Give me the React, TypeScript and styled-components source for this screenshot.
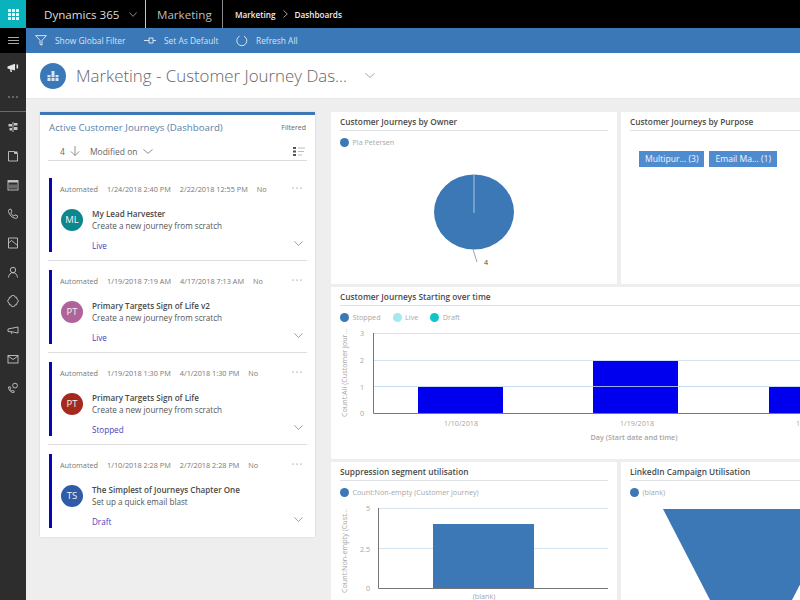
import React from 'react';
import styled, { createGlobalStyle } from 'styled-components';

const GlobalStyle = createGlobalStyle`
	html, body {
		margin: 0;
		padding: 0;
		height: 100%;
		overflow: hidden;
		background: #eeeeee;
		font-family: 'Open Sans', 'Noto Sans', sans-serif;
	}
`;

const Page = styled.div`
	width: 800px;
	height: 600px;
	overflow: hidden;
	display: flex;
	flex-direction: column;
`;

const TopBar = styled.header`
	height: 28px;
	flex: none;
	background: #000;
	color: #fff;
	display: flex;
	align-items: center;
`;

const Waffle = styled.div`
	width: 26px;
	height: 28px;
	background: #08b3bd;
	display: grid;
	grid-template-columns: repeat(3, 3px);
	grid-auto-rows: 3px;
	gap: 1px;
	align-content: center;
	justify-content: center;

	i {
		background: #e8fafb;
	}
`;

const Product = styled.div`
	width: 120px;
	height: 28px;
	box-sizing: border-box;
	padding-left: 18px;
	border-right: 1px solid #c8c8c8;
	display: flex;
	align-items: center;
	gap: 10px;
	font-size: 11.6px;
	color: #dcdcdc;
	white-space: nowrap;
`;

const AppName = styled.div`
	width: 77px;
	height: 28px;
	box-sizing: border-box;
	padding-left: 11px;
	border-right: 1px solid #8a8a8a;
	display: flex;
	align-items: center;
	font-size: 11.6px;
	color: #bcbcbc;
`;

const Crumbs = styled.div`
	display: flex;
	align-items: center;
	margin-left: 12px;
	gap: 7px;
	font-size: 8.2px;
	font-weight: 600;
	color: #f0f0f0;
`;

const Body = styled.div`
	flex: 1;
	display: flex;
	min-height: 0;
`;

const Sidebar = styled.nav`
	width: 26px;
	flex: none;
	background: #2d2d2d;
	display: flex;
	flex-direction: column;
	align-items: center;
	color: #c6c6c6;
`;

const Hamburger = styled.div`
	width: 100%;
	height: 25px;
	background: #000;
	display: flex;
	align-items: center;
	justify-content: center;
`;

const NavSlot = styled.div`
	width: 100%;
	height: 29px;
	flex: none;
	display: flex;
	align-items: center;
	justify-content: center;
`;

const NavDivider = styled.div`
	width: 100%;
	height: 1px;
	flex: none;
	background: #6a6a6a;
`;

const Content = styled.div`
	flex: 1;
	min-width: 0;
	display: flex;
	flex-direction: column;
`;

const CommandBar = styled.div`
	height: 25px;
	flex: none;
	background: #3b78b8;
	display: flex;
	align-items: center;
	padding-left: 9px;
	color: #d6e3f1;
	font-size: 8.4px;
`;

const Command = styled.div<{ $w: number }>`
	width: ${(p) => p.$w}px;
	flex: none;
	display: flex;
	align-items: center;
	gap: 8px;
	white-space: nowrap;
`;

const TitleBar = styled.div`
	height: 46px;
	flex: none;
	background: #fff;
	display: flex;
	align-items: center;
	padding-left: 14px;
	box-sizing: border-box;
	border-bottom: 1px solid #e8e8e8;
`;

const TitleBadge = styled.div`
	width: 26px;
	height: 26px;
	border-radius: 50%;
	background: #3b78b8;
	display: flex;
	align-items: center;
	justify-content: center;
`;

const Title = styled.h1`
	margin: 0 18px 0 10px;
	font-size: 16.85px;
	font-weight: 300;
	color: #666;
	white-space: nowrap;
`;

const Main = styled.main`
	flex: 1;
	min-height: 0;
	overflow: hidden;
	display: flex;
	gap: 16px;
	padding: 13px 0 0 14px;
`;

const ListPanel = styled.section`
	width: 275px;
	height: 425px;
	flex: none;
	box-sizing: border-box;
	background: #fff;
	border-top: 3px solid #3b78b5;
	padding: 0 8px;
	box-shadow: 0 0 2px rgba(0, 0, 0, 0.12);
`;

const PanelHead = styled.div`
	display: flex;
	justify-content: space-between;
	align-items: center;
	height: 24px;
	padding: 0 1px;
`;

const PanelTitle = styled.div`
	font-size: 9.7px;
	color: #5a82a8;
	white-space: nowrap;
`;

const Filtered = styled.div`
	font-size: 7px;
	color: #666;
`;

const SortRow = styled.div`
	height: 22px;
	box-sizing: border-box;
	padding: 3px 0 0 12px;
	border-bottom: 1px solid #dcdcdc;
	display: flex;
	align-items: center;
	font-size: 8.5px;
	color: #666;
`;

const SortLabel = styled.span`
	margin: 0 5px 0 10px;
	white-space: nowrap;
`;

const SortListIcon = styled.div`
	margin-left: auto;
	margin-right: 2px;
	display: flex;
`;

const List = styled.div`
	padding-top: 17px;
`;

const Item = styled.div<{ $last?: boolean }>`
	padding-bottom: 8px;
	margin-bottom: ${(p) => (p.$last ? 0 : 9)}px;
	border-bottom: ${(p) => (p.$last ? 'none' : '1px solid #dedede')};
`;

const Stripe = styled.div`
	position: relative;
	margin-left: 1px;
	height: 74px;
	box-sizing: border-box;
	border-left: 3px solid #0606b4;
	padding: 5px 0 0 8px;
`;

const Meta = styled.div`
	display: flex;
	gap: 9px;
	height: 12px;
	line-height: 12px;
	font-size: 7.3px;
	color: #777;
	white-space: nowrap;
`;

const More = styled.div`
	position: absolute;
	right: 5px;
	top: 9px;
	display: flex;
`;

const Person = styled.div`
	display: flex;
	align-items: center;
	gap: 9px;
	margin: 13px 0 0 1px;
`;

const Avatar = styled.div<{ $bg: string }>`
	width: 22px;
	height: 22px;
	flex: none;
	border-radius: 50%;
	background: ${(p) => p.$bg};
	color: #f4f4f4;
	font-size: 9.5px;
	display: flex;
	align-items: center;
	justify-content: center;
`;

const Name = styled.div`
	font-size: 8.1px;
	font-weight: 600;
	line-height: 11.5px;
	color: #4a4a4a;
	white-space: nowrap;
`;

const Sub = styled.div`
	font-size: 8.1px;
	line-height: 11.5px;
	color: #555;
	white-space: nowrap;
`;

const Status = styled.div`
	margin: 9px 0 0 32px;
	font-size: 8.1px;
	line-height: 12px;
	color: #4343bd;
`;

const Expand = styled.div`
	position: absolute;
	right: 4px;
	bottom: 6px;
	display: flex;
`;

const Charts = styled.div`
	flex: none;
	display: flex;
	flex-direction: column;
	gap: 3px;
`;

const ChartRow = styled.div`
	flex: none;
	display: grid;
	grid-template-columns: 286px 286px;
	gap: 4px;
`;

const Card = styled.section<{ $wide?: boolean; $h: number }>`
	flex: none;
	width: ${(p) => (p.$wide ? 576 : 286)}px;
	height: ${(p) => p.$h}px;
	box-sizing: border-box;
	background: #fff;
	padding: 0 9px;
	overflow: hidden;
`;

const CardTitle = styled.h2`
	margin: 0;
	height: 19px;
	line-height: 20px;
	box-sizing: border-box;
	border-bottom: 1px solid #dfe3e6;
	font-size: 8.3px;
	font-weight: 600;
	color: #4a4a4a;
	white-space: nowrap;
`;

const Legend = styled.div`
	display: flex;
	align-items: center;
	height: 22px;
	font-size: 7.2px;
	color: #a8a8a8;
	white-space: nowrap;
`;

const LegendEntry = styled.div`
	display: flex;
	align-items: center;
	gap: 3.5px;
	margin-right: 12px;
`;

const Dot = styled.span<{ $c: string }>`
	width: 9px;
	height: 9px;
	border-radius: 50%;
	background: ${(p) => p.$c};
`;

const Plot = styled.svg`
	display: block;
	margin-left: -9px;

	text {
		font-family: 'Open Sans', 'Noto Sans', sans-serif;
		font-size: 7.2px;
		fill: #a6a6a6;
	}
`;

const Tags = styled.div`
	display: flex;
	gap: 5px;
	padding: 20px 0 0 9px;
`;

const Tag = styled.div`
	height: 16px;
	line-height: 16px;
	padding: 0 6px;
	background: #4f8ccf;
	color: #f2f6fb;
	font-size: 8.6px;
	white-space: nowrap;
`;

const Line = ({ w = 12, h = 12, children }: { w?: number; h?: number; children: React.ReactNode }) => (
	<svg width={w} height={h} viewBox={`0 0 ${w} ${h}`} fill="none" stroke="currentColor" strokeWidth="0.9">
		{children}
	</svg>
);

const Chevron = ({ w = 9, color = '#888' }: { w?: number; color?: string }) => (
	<svg width={w} height={5} viewBox="0 0 9 5" fill="none" stroke={color} strokeWidth="0.7" preserveAspectRatio="none">
		<path d="M0.4 0.4 L4.5 4.4 L8.6 0.4" />
	</svg>
);

const navIcons = [
	// dashboards
	<Line key="d">
		<path d="M6 1v10" />
		<rect x="1.5" y="3" width="3.5" height="2.5" fill="currentColor" stroke="none" />
		<rect x="7" y="2" width="3.5" height="2.5" fill="currentColor" stroke="none" />
		<rect x="2.5" y="7" width="2.5" height="2.5" fill="currentColor" stroke="none" />
		<rect x="7" y="6" width="3.5" height="3" fill="currentColor" stroke="none" />
	</Line>,
	// document
	<Line key="f">
		<path d="M1.5 1.5h6v2h3v7.5h-9z" />
		<rect x="7.5" y="1.5" width="3" height="2" fill="currentColor" stroke="none" />
	</Line>,
	// calendar
	<Line key="c">
		<rect x="1" y="1.5" width="10" height="9.5" />
		<rect x="1" y="1.5" width="10" height="2" fill="currentColor" stroke="none" />
		<path d="M3 5.5v4M5 5.5v4M7 5.5v4M9 5.5v4" strokeWidth="0.8" />
	</Line>,
	// phone
	<Line key="p">
		<path d="M2 1.5l2 -0.3 1 2.6 -1.3 1c0.6 1.5 1.7 2.6 3.2 3.3l1 -1.3 2.6 1 -0.2 2c-0.3 0.5 -1 0.7 -1.8 0.6 -3.5 -0.6 -6.4 -3.6 -7 -7 -0.1 -0.8 0.1 -1.5 0.5 -1.9z" />
	</Line>,
	// form
	<Line key="b">
		<path d="M1.5 1h9v10h-9z" />
		<path d="M1.5 6l3 -2.5 6 5" />
	</Line>,
	// contact
	<Line key="u">
		<circle cx="6" cy="4" r="2.7" />
		<path d="M1.5 11.5c0.3 -3 2 -4.8 4.5 -4.8s4.2 1.8 4.5 4.8" />
	</Line>,
	// segments
	<Line key="s">
		<path d="M4 2.2a2 2 0 0 1 4 0h1.6l0.3 1.9a2 2 0 0 1 0 3.8l-0.3 1.9H8a2 2 0 0 1 -4 0H2.4l-0.3 -1.9a2 2 0 0 1 0 -3.8l0.3 -1.9z" />
	</Line>,
	// campaign
	<Line key="m">
		<path d="M1 5l10 -2v6l-6 -1.2 -4 -0.3z" />
		<path d="M4 8l1 2" />
	</Line>,
	// email
	<Line key="e">
		<rect x="1" y="2.5" width="10" height="7.5" />
		<path d="M1 3l5 3.5 5 -3.5" />
	</Line>,
	// phone and gear
	<Line key="g">
		<path d="M1.5 5l1.5 -0.3 0.7 1.8 -0.8 0.7c0.4 0.9 1 1.5 2 2l0.7 -0.8 1.6 0.7 -0.3 1.4c-2.8 0.3 -5.3 -2.4 -5.4 -5.5z" />
		<circle cx="8" cy="3.6" r="2.4" />
	</Line>,
];

const journeys = [
	{ d1: '1/24/2018 2:40 PM', d2: '2/22/2018 12:55 PM', initials: 'ML', color: '#0b878d', name: 'My Lead Harvester', sub: 'Create a new journey from scratch', status: 'Live' },
	{ d1: '1/19/2018 7:19 AM', d2: '4/17/2018 7:13 AM', initials: 'PT', color: '#b0629b', name: 'Primary Targets Sign of Life v2', sub: 'Create a new journey from scratch', status: 'Live' },
	{ d1: '1/19/2018 1:30 PM', d2: '4/1/2018 1:30 PM', initials: 'PT', color: '#a42a1e', name: 'Primary Targets Sign of Life', sub: 'Create a new journey from scratch', status: 'Stopped' },
	{ d1: '1/10/2018 2:28 PM', d2: '2/7/2018 2:28 PM', initials: 'TS', color: '#2f5ca6', name: 'The Simplest of Journeys Chapter One', sub: 'Set up a quick email blast', status: 'Draft' },
];

function App() {
	return (
		<Page>
			<GlobalStyle />
			<TopBar>
				<Waffle>
					{Array.from({ length: 9 }).map((_, i) => (
						<i key={i} />
					))}
				</Waffle>
				<Product>
					Dynamics 365
					<Chevron w={8} color="#ccc" />
				</Product>
				<AppName>Marketing</AppName>
				<Crumbs>
					<span>Marketing</span>
					<svg width="5" height="8" viewBox="0 0 5 8" fill="none" stroke="#ccc" strokeWidth="0.8">
						<path d="M0.5 0.5L4.3 4L0.5 7.5" />
					</svg>
					<span>Dashboards</span>
				</Crumbs>
			</TopBar>
			<Body>
				<Sidebar>
					<Hamburger>
						<svg width="11" height="7" viewBox="0 0 11 7" stroke="#bbb" strokeWidth="0.9">
							<path d="M0 0.5h11M0 3.5h11M0 6.5h11" />
						</svg>
					</Hamburger>
					<NavSlot>
						<svg width="12" height="10" viewBox="0 0 12 10" fill="#e6e6e6">
							<path d="M0.5 3.5L8 0.8v6.6L4.5 6.6 5 9H3.5L3 6.2 0.5 5.6z" />
							<rect x="9.5" y="1.5" width="1.6" height="4" />
						</svg>
					</NavSlot>
					<NavSlot>
						<svg width="10" height="2" viewBox="0 0 10 2" fill="#ccc">
							<circle cx="1" cy="1" r="0.7" />
							<circle cx="5" cy="1" r="0.7" />
							<circle cx="9" cy="1" r="0.7" />
						</svg>
					</NavSlot>
					<NavDivider />
					{navIcons.map((icon, i) => (
						<NavSlot key={i}>{icon}</NavSlot>
					))}
				</Sidebar>
				<Content>
					<CommandBar>
						<Command $w={109}>
							<svg width="12" height="11" viewBox="0 0 12 11" fill="none" stroke="#e8eff7" strokeWidth="0.9">
								<path d="M0.6 0.6h10.8L7 5.4v4.8l-2 -1V5.4z" />
							</svg>
							Show Global Filter
						</Command>
						<Command $w={92}>
							<svg width="12" height="7" viewBox="0 0 12 7" fill="none" stroke="#e8eff7" strokeWidth="0.9">
								<path d="M0 3.5h5M5 1v5M5 1h4v5H5M9 3.5h3" />
							</svg>
							Set As Default
						</Command>
						<Command $w={70}>
							<svg width="12" height="12" viewBox="0 0 12 12" fill="none" stroke="#e8eff7" strokeWidth="0.9">
								<path d="M3.6 1.2A5 5 0 1 0 8 1.2" />
							</svg>
							Refresh All
						</Command>
					</CommandBar>
					<TitleBar>
						<TitleBadge>
							<svg width="12" height="12" viewBox="0 0 12 12" fill="#dbe6f2">
								<rect x="0.5" y="5" width="3" height="6" />
								<rect x="4.5" y="1" width="3" height="10" />
								<rect x="8.5" y="5" width="3" height="6" />
								<path d="M0 7.5h12" stroke="#3b78b8" strokeWidth="0.8" />
							</svg>
						</TitleBadge>
						<Title>Marketing - Customer Journey Das...</Title>
						<Chevron w={10} />
					</TitleBar>
					<Main>
						<ListPanel>
							<PanelHead>
								<PanelTitle>Active Customer Journeys (Dashboard)</PanelTitle>
								<Filtered>Filtered</Filtered>
							</PanelHead>
							<SortRow>
								<span>4</span>
								<svg width="10" height="10" viewBox="0 0 10 10" fill="none" stroke="#777" strokeWidth="0.8" style={{ marginLeft: 5 }}>
									<path d="M5 0v9.4M0.8 5.4L5 9.6l4.2 -4.2" />
								</svg>
								<SortLabel>Modified on</SortLabel>
								<Chevron w={10} color="#666" />
								<SortListIcon>
									<svg width="12" height="9" viewBox="0 0 12 9">
										<path d="M0 0h3v2H0zM0 3.5h3v2H0zM0 7h3v2H0z" fill="#555" />
										<path d="M5 1h7M5 4.5h6M5 8h4" stroke="#aaa" strokeWidth="0.8" />
									</svg>
								</SortListIcon>
							</SortRow>
							<List>
								{journeys.map((j, i) => (
									<Item key={i} $last={i === journeys.length - 1}>
										<Stripe>
											<Meta>
												<span>Automated</span>
												<span>{j.d1}</span>
												<span>{j.d2}</span>
												<span>No</span>
											</Meta>
											<More>
												<svg width="10" height="2" viewBox="0 0 10 2" fill="#666">
													<circle cx="1" cy="1" r="0.6" />
													<circle cx="5" cy="1" r="0.6" />
													<circle cx="9" cy="1" r="0.6" />
												</svg>
											</More>
											<Person>
												<Avatar $bg={j.color}>{j.initials}</Avatar>
												<div>
													<Name>{j.name}</Name>
													<Sub>{j.sub}</Sub>
												</div>
											</Person>
											<Status>{j.status}</Status>
											<Expand>
												<Chevron color="#777" />
											</Expand>
										</Stripe>
									</Item>
								))}
							</List>
						</ListPanel>
						<Charts>
							<ChartRow>
								<Card $h={172}>
									<CardTitle>Customer Journeys by Owner</CardTitle>
									<Legend>
										<LegendEntry>
											<Dot $c="#3b78b5" />
											Pia Petersen
										</LegendEntry>
									</Legend>
									<Plot width="286" height="131" viewBox="0 41 286 131">
										<ellipse cx="143" cy="100" rx="40" ry="37.5" fill="#3b78b5" />
										<path d="M143 62.5V101" stroke="#a9c6e2" strokeWidth="1" />
										<path d="M142 137.5L146 150" stroke="#666" strokeWidth="0.6" />
										<text x="153" y="153" style={{ fill: '#444' }}>
											4
										</text>
									</Plot>
								</Card>
								<Card $h={172}>
									<CardTitle>Customer Journeys by Purpose</CardTitle>
									<Tags>
										<Tag>Multipur... (3)</Tag>
										<Tag>Email Ma... (1)</Tag>
									</Tags>
								</Card>
							</ChartRow>
							<Card $wide $h={172}>
								<CardTitle>Customer Journeys Starting over time</CardTitle>
								<Legend>
									<LegendEntry>
										<Dot $c="#3b78b5" />
										Stopped
									</LegendEntry>
									<LegendEntry>
										<Dot $c="#a6e8ec" />
										Live
									</LegendEntry>
									<LegendEntry>
										<Dot $c="#10c4cc" />
										Draft
									</LegendEntry>
								</Legend>
								<Plot width="576" height="131" viewBox="0 41 576 131">
									<path d="M43 46.5H576M43 73.5H576M43 99.5H576" stroke="#d3e2f0" strokeWidth="1" />
									<rect x="87" y="100" width="85" height="26" fill="#0000ee" />
									<rect x="262" y="74" width="85" height="52" fill="#0000ee" />
									<rect x="438" y="100" width="85" height="26" fill="#0000ee" />
									<path d="M43 99.5H576" stroke="#c5d9ee" strokeWidth="0.8" />
									<path d="M42.5 46V126.5H576" fill="none" stroke="#777" strokeWidth="1" />
									<text x="31" y="49" textAnchor="middle">3</text>
									<text x="31" y="76" textAnchor="middle">2</text>
									<text x="31" y="103" textAnchor="middle">1</text>
									<text x="31" y="129" textAnchor="middle">0</text>
									<text x="130" y="139" textAnchor="middle">1/10/2018</text>
									<text x="306" y="139" textAnchor="middle">1/19/2018</text>
									<text x="482" y="139" textAnchor="middle">1/24/2018</text>
									<text x="303" y="153" textAnchor="middle" style={{ fontWeight: 600 }}>
										Day (Start date and time)
									</text>
									<text transform="translate(16 130) rotate(-90)">Count:All (Customer jour...</text>
								</Plot>
							</Card>
							<ChartRow>
								<Card $h={172}>
									<CardTitle>Suppression segment utilisation</CardTitle>
									<Legend>
										<LegendEntry>
											<Dot $c="#3b78b5" />
											Count:Non-empty (Customer journey)
										</LegendEntry>
									</Legend>
									<Plot width="286" height="131" viewBox="0 41 286 131">
										<path d="M48 46.5H277M48 86.5H277" stroke="#d3e2f0" strokeWidth="1" />
										<rect x="102" y="62" width="101" height="64" fill="#3b78b5" />
										<path d="M47.5 46V126.5H277" fill="none" stroke="#777" strokeWidth="1" />
										<text x="37" y="49" textAnchor="middle">5</text>
										<text x="34" y="90" textAnchor="middle">2.5</text>
										<text x="37" y="129" textAnchor="middle">0</text>
										<text x="153" y="137" textAnchor="middle">(blank)</text>
										<text transform="translate(16 131) rotate(-90)">Count:Non-empty (Cust...</text>
									</Plot>
								</Card>
								<Card $h={172}>
									<CardTitle>LinkedIn Campaign Utilisation</CardTitle>
									<Legend>
										<LegendEntry>
											<Dot $c="#3b78b5" />
											(blank)
										</LegendEntry>
									</Legend>
									<Plot width="286" height="131" viewBox="0 41 286 131">
										<polygon points="42,47 218,47 171,138 89,138" fill="#3b78b5" />
									</Plot>
								</Card>
							</ChartRow>
						</Charts>
					</Main>
				</Content>
			</Body>
		</Page>
	);
}

export default App;
